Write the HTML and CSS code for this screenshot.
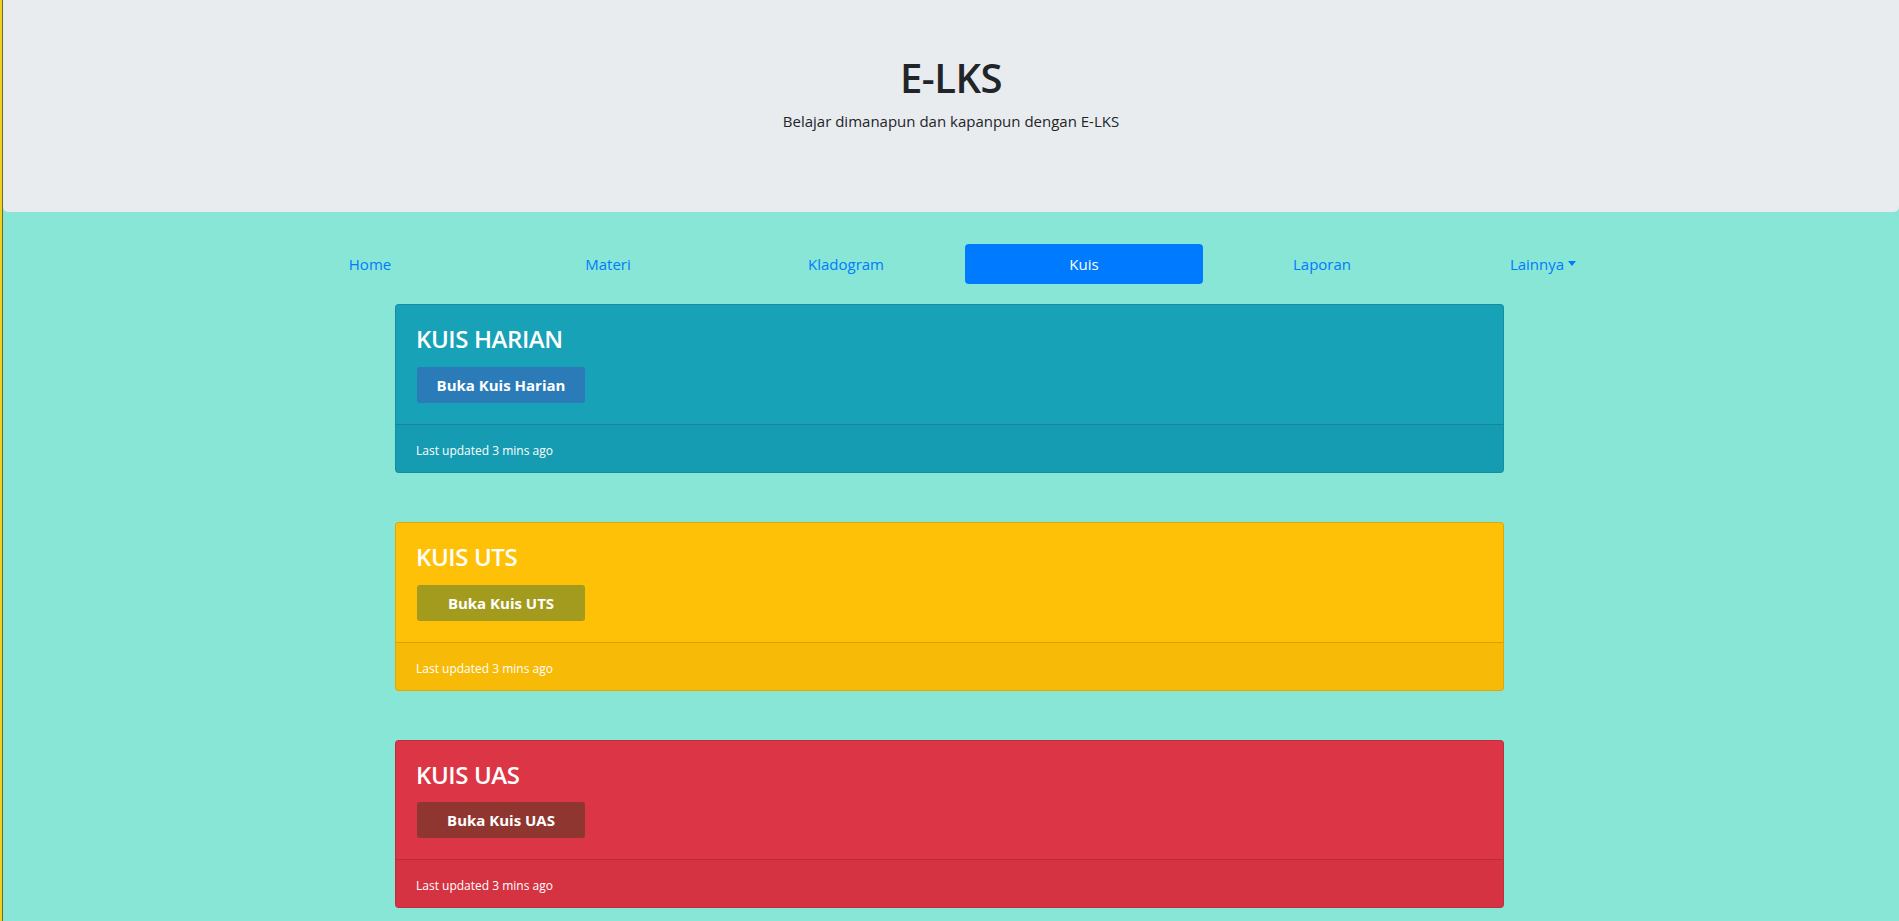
FILE: index.html
```html
<!DOCTYPE html>
<html lang="id">
<head>
<meta charset="utf-8">
<title>E-LKS</title>
<link rel="stylesheet" href="styles.css">
</head>
<body>
<div class="page">
  <header class="jumbotron">
    <h1 class="jumbo-title">E-LKS</h1>
    <p class="jumbo-sub">Belajar dimanapun dan kapanpun dengan E-LKS</p>
  </header>

  <nav class="nav">
    <a class="nav-link" href="#">Home</a>
    <a class="nav-link" href="#">Materi</a>
    <a class="nav-link" href="#">Kladogram</a>
    <a class="nav-link active" href="#">Kuis</a>
    <a class="nav-link" href="#">Laporan</a>
    <a class="nav-link dropdown-toggle" href="#">Lainnya</a>
  </nav>

  <main class="cards">
    <section class="card card-info">
      <div class="card-body">
        <h4 class="card-title">KUIS HARIAN</h4>
        <a class="btn btn-info-dark" href="#">Buka Kuis Harian</a>
      </div>
      <div class="card-footer">Last updated 3 mins ago</div>
    </section>

    <section class="card card-warning">
      <div class="card-body">
        <h4 class="card-title">KUIS UTS</h4>
        <a class="btn btn-olive" href="#">Buka Kuis UTS</a>
      </div>
      <div class="card-footer">Last updated 3 mins ago</div>
    </section>

    <section class="card card-danger">
      <div class="card-body">
        <h4 class="card-title">KUIS UAS</h4>
        <a class="btn btn-brown" href="#">Buka Kuis UAS</a>
      </div>
      <div class="card-footer">Last updated 3 mins ago</div>
    </section>
  </main>
</div>
</body>
</html>
```

FILE: styles.css
```css
html {
  background: #88e6d6;
}

body {
  margin: 0;
  font-family: "Open Sans", "Noto Sans", "Liberation Sans", sans-serif;
  color: #212529;
  background: #88e6d6;
  min-height: 921px;
  border-left: 2px solid #f0d21c;
  box-sizing: border-box;
}

.page {
  border-left: 1px solid #6b6a32;
  min-height: 921px;
  box-sizing: border-box;
  padding-bottom: 12px;
}

/* Jumbotron */
.jumbotron {
  background: #e9ecef;
  height: 212px;
  box-sizing: border-box;
  border-radius: 0 0 5px 5px;
  padding-top: 54px;
  text-align: center;
}

.jumbo-title {
  margin: 0;
  font-size: 40px;
  line-height: 48px;
  font-weight: 600;
  letter-spacing: -0.5px;
}

.jumbo-sub {
  margin: 7px 0 0;
  font-size: 15px;
  line-height: 24px;
  font-weight: 400;
}

/* Nav */
.nav {
  display: grid;
  grid-template-columns: repeat(5, 238px) 204px;
  margin: 32px 0 0 248px;
  width: 1394px;
}

.nav-link {
  display: block;
  text-align: center;
  padding: 8px 0;
  line-height: 24px;
  font-size: 15px;
  color: #007bff;
  text-decoration: none;
  border-radius: 4px;
}

.nav-link.active {
  background: #007bff;
  color: #fff;
}

.dropdown-toggle::after {
  content: "";
  display: inline-block;
  margin-left: 4px;
  vertical-align: 4px;
  border-top: 5px solid #007bff;
  border-left: 4px solid transparent;
  border-right: 4px solid transparent;
}

/* Cards */
.cards {
  width: 1109px;
  margin: 20px 0 0 392px;
  display: flex;
  flex-direction: column;
  gap: 49px;
}

.card {
  border: 1px solid rgba(0, 0, 0, 0.125);
  border-radius: 4px;
  color: #fff;
  overflow: hidden;
}

.card-info { background: #17a2b8; }
.card-warning { background: #ffc107; }
.card-danger { background: #dc3545; }

.card-body {
  padding: 20px 20px 21px 20px;
  display: flex;
  flex-direction: column;
  align-items: flex-start;
}

.card-title {
  margin: 0 0 13px;
  font-size: 24px;
  line-height: 28.8px;
  font-weight: 600;
  letter-spacing: -0.4px;
}

.btn {
  display: block;
  width: 168px;
  height: 36px;
  margin-left: 1px;
  box-sizing: border-box;
  border-radius: 3px;
  color: #fff;
  text-decoration: none;
  text-align: center;
  font-size: 15px;
  line-height: 36px;
  font-weight: 700;
}

.btn-info-dark { background: #2a7bb8; }
.btn-olive { background: #a39b1d; }
.btn-brown { background: #8f3630; }

.card-footer {
  border-top: 1px solid rgba(0, 0, 0, 0.125);
  background: rgba(0, 0, 0, 0.03);
  padding: 15px 20px 10px;
  font-size: 12px;
  line-height: 22px;
}
```
